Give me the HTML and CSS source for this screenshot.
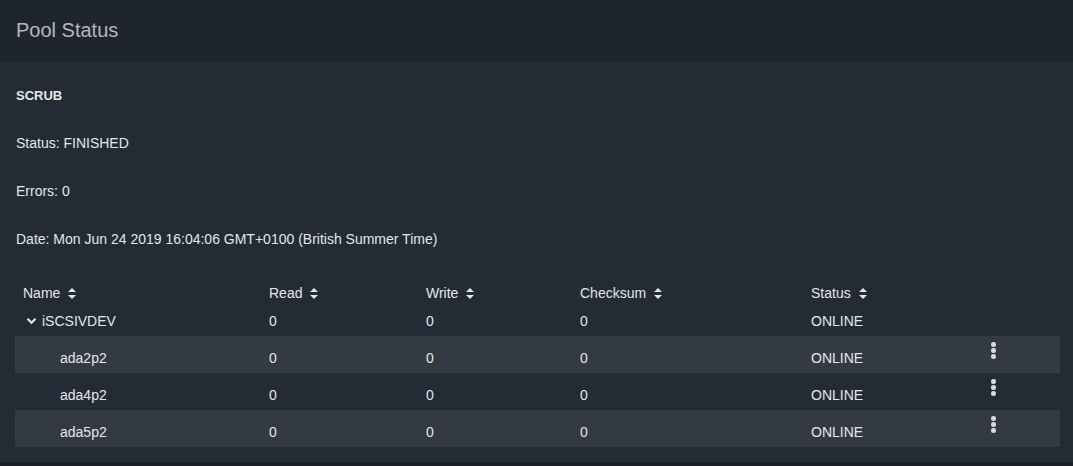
FILE: index.html
```html
<!DOCTYPE html>
<html>
<head>
<meta charset="utf-8">
<title>Pool Status</title>
<link rel="stylesheet" href="styles.css">
</head>
<body>
<section class="card">
<header class="card-head">
<h1>Pool Status</h1>
</header>
<div class="card-body">
<h2>SCRUB</h2>
<p>Status: FINISHED</p>
<p>Errors: 0</p>
<p>Date: Mon Jun 24 2019 16:04:06 GMT+0100 (British Summer Time)</p>
<div class="grid">
    <div class="row head">
        <div>Name <span class="sort"></span></div>
        <div>Read <span class="sort"></span></div>
        <div>Write <span class="sort"></span></div>
        <div>Checksum <span class="sort"></span></div>
        <div>Status <span class="sort"></span></div>
        <div></div>
    </div>
    <div class="row pool">
        <div><svg class="chev" width="11" height="8" viewBox="0 0 11 8"><path d="M1.5 1.8 L5.5 5.8 L9.5 1.8" fill="none" stroke="#e6e6e6" stroke-width="2.2"/></svg>iSCSIVDEV</div>
        <div>0</div><div>0</div><div>0</div><div>ONLINE</div><div></div>
    </div>
    <div class="row disk odd">
        <div class="indent">ada2p2</div>
        <div>0</div><div>0</div><div>0</div><div>ONLINE</div>
        <div class="act"><span class="kebab"><i></i><i></i><i></i></span></div>
    </div>
    <div class="row disk">
        <div class="indent">ada4p2</div>
        <div>0</div><div>0</div><div>0</div><div>ONLINE</div>
        <div class="act"><span class="kebab"><i></i><i></i><i></i></span></div>
    </div>
    <div class="row disk odd">
        <div class="indent">ada5p2</div>
        <div>0</div><div>0</div><div>0</div><div>ONLINE</div>
        <div class="act"><span class="kebab"><i></i><i></i><i></i></span></div>
    </div>
</div>
</div>
</section>
</body>
</html>
```

FILE: styles.css
```css
body {
    margin: 0;
    background-color: #1b2027;
    font-family: "Liberation Sans", Arial, sans-serif;
    color: #e4e6e8;
}
.card {
    width: 1073px;
    background-color: #232b34;
}
.card-head {
    height: 62px;
    background-color: #1f252e;
    display: flex;
    align-items: center;
    padding-left: 16px;
}
h1 {
    margin: 0;
    font-size: 20px;
    font-weight: normal;
    color: #b4b9be;
    padding-bottom: 2px;
}
.card-body {
    padding: 26px 13px 15px 16px;
}
h2 {
    margin: 0 0 31px 0;
    font-size: 13px;
    font-weight: bold;
    line-height: 16px;
    color: #e8e8e8;
}
p {
    margin: 0 0 32px 0;
    font-size: 14px;
    line-height: 16px;
}
.grid {
    margin-top: 0;
    margin-left: -1px;
}
.row {
    display: grid;
    grid-template-columns: 246px 157px 154px 231px 180px 1fr;
    align-items: center;
    padding-left: 8px;
    font-size: 14px;
}
.row.head {
    height: 27px;
    line-height: 16px;
}
.row.pool {
    height: 30px;
    padding-bottom: 1px;
    box-sizing: border-box;
}
.row.disk {
    height: 37px;
    padding-top: 6px;
    box-sizing: border-box;
}
.row.odd {
    background-color: #343a42;
}
.indent {
    padding-left: 37px;
}
.chev {
    margin: 0 5px 0 3px;
    vertical-align: 1px;
}
.sort {
    display: inline-block;
    width: 9px;
    height: 11px;
    margin-left: 4px;
    vertical-align: -1px;
    position: relative;
}
.sort:before, .sort:after {
    content: "";
    position: absolute;
    left: 0;
    border-left: 4.5px solid transparent;
    border-right: 4.5px solid transparent;
}
.sort:before {
    top: 0;
    border-bottom: 4.5px solid #e4e6e8;
}
.sort:after {
    bottom: 0;
    border-top: 4.5px solid #e4e6e8;
}
.act {
    align-self: start;
}
.kebab {
    display: flex;
    flex-direction: column;
    gap: 1.5px;
    width: 5px;
    margin-top: 0;
}
.kebab i {
    display: block;
    width: 4.5px;
    height: 4.5px;
    border-radius: 50%;
    background-color: #d8dadc;
}
```
